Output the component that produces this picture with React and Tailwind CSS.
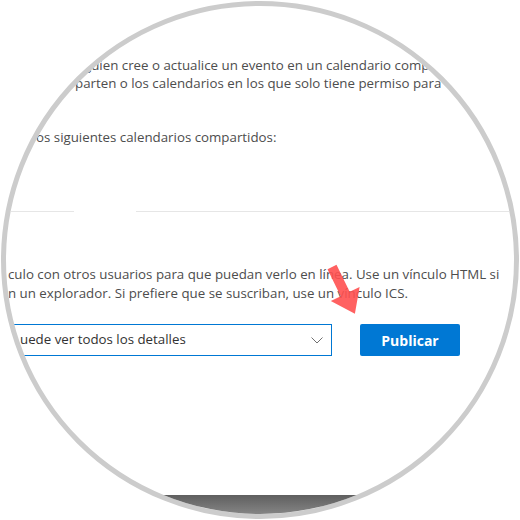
import React from "react";

function Arrow() {
  return (
    <svg
      className="absolute left-0 top-0 pointer-events-none"
      width="520"
      height="520"
      viewBox="0 0 520 520"
    >
      <polygon
        points="327.5,269.2 336.5,264.8 349.7,291.8 359.6,287 354.9,313.8 330.8,301 340.7,296.2"
        fill="#ff5050"
        fillOpacity="0.9"
      />
    </svg>
  );
}

export default function App() {
  return (
    <div className="relative w-[520px] h-[520px] bg-white p-px">
      <div className="w-[518px] h-[518px] rounded-full border-[5px] border-[#cccccc] overflow-hidden flex flex-col bg-white font-['Open_Sans','Noto_Sans',sans-serif] text-[13.3px] text-[#4d4d4d]">
        <div className="pt-[50px] leading-[18px] whitespace-nowrap">
          <div className="ml-[78px]">guien cree o actualice un evento en un calendario compartido</div>
          <div className="ml-[69px]">parten o los calendarios en los que solo tiene permiso para</div>
        </div>
        <div className="mt-[36px] ml-[30px] leading-[18px] whitespace-nowrap">
          os siguientes calendarios compartidos:
        </div>
        <div className="mt-[65px] flex h-px">
          <div className="w-[68px] bg-[#e6e6e6]" />
          <div className="w-[62px]" />
          <div className="flex-1 bg-[#e6e6e6]" />
        </div>
        <div className="mt-[53px] ml-[2px] leading-[19px] whitespace-nowrap">
          <div>culo con otros usuarios para que puedan verlo en línea. Use un vínculo HTML si</div>
          <div>n un explorador. Si prefiere que se suscriban, use un vínculo ICS.</div>
        </div>
        <div className="mt-[21px] flex items-center">
          <div className="w-[326px] h-[32px] border border-[#0078d4] flex items-center justify-between pl-[13px] pr-[8px] text-[#323232]">
            <span className="whitespace-nowrap">uede ver todos los detalles</span>
            <svg width="12" height="7" viewBox="0 0 12 7">
              <polyline points="0.5,0.5 6,6 11.5,0.5" fill="none" stroke="#707070" strokeWidth="1" />
            </svg>
          </div>
          <div className="ml-[28px] w-[100px] h-[32px] rounded-[2px] bg-[#0078d4] text-white text-[14px] font-bold flex items-center justify-center">
            Publicar
          </div>
        </div>
        <div className="mt-[139px] flex-1 bg-linear-to-b from-[#5f5f5f] to-[#858585]" />
      </div>
      <Arrow />
    </div>
  );
}
